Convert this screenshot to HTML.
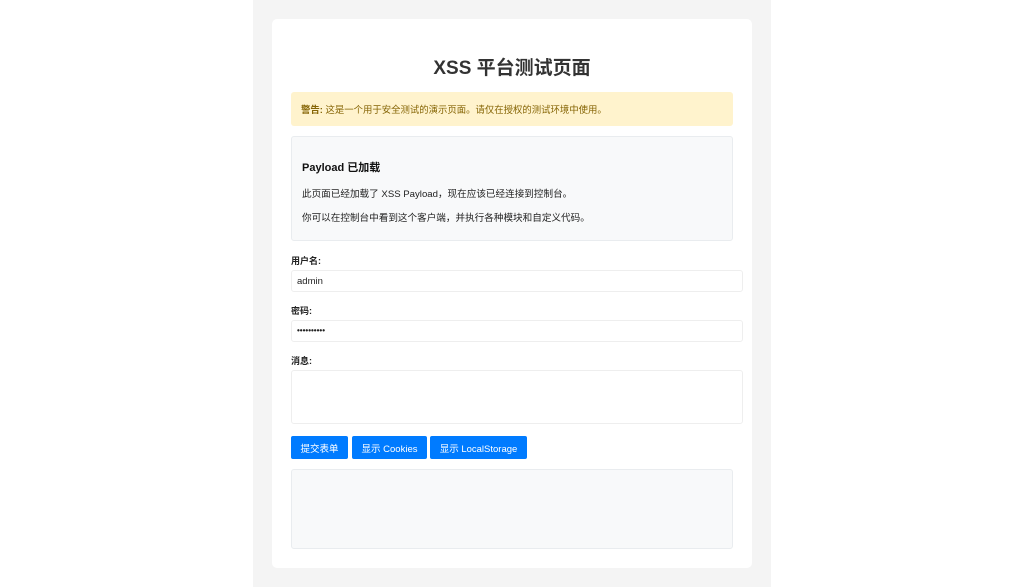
<!DOCTYPE html>
<html><head><meta charset="utf-8"><style>
*{box-sizing:border-box}
body{margin:0;background:#fff;font-family:"Liberation Sans","Noto Sans CJK SC",sans-serif;height:587px;overflow:hidden}
.wrap{position:absolute;left:253px;top:0;width:518px;height:587px;background:#f4f4f4}
.card{position:absolute;left:19px;top:19px;width:480px;height:549px;background:#fff;border-radius:5px}
.in{position:absolute;left:19px;width:442px}
h1{position:absolute;left:0;width:480px;top:38px;margin:0;text-align:center;font-size:19px;color:#333;font-weight:bold;line-height:24px}
.warn{top:73px;height:34px;background:#fff3cd;color:#856404;border-radius:3px;font-size:9.4px;line-height:36px;padding-left:10px}
.pay{top:117px;height:105px;background:#f8f9fa;border:1px solid #e9ecef;border-radius:3px;font-size:9.6px;color:#222}
.pay b{position:absolute;left:10px;top:22px;font-size:11px;color:#111}
.pay span{position:absolute;left:10px}
.lab{font-size:9px;font-weight:bold;color:#222}
.inp{width:452px;border:1px solid #eee;border-radius:3px;background:#fff;font-size:9.5px;padding-left:5px;color:#222}
.btn{position:absolute;top:417px;height:23px;background:#007bff;color:#fff;font-size:9.5px;line-height:27px;text-align:center;border-radius:2px}
.out{top:450px;height:80px;background:#f8f9fa;border:1px solid #e9ecef;border-radius:3px}
</style></head><body>
<div class="wrap"><div class="card">
<h1>XSS 平台测试页面</h1>
<div class="in warn"><b>警告:</b> 这是一个用于安全测试的演示页面。请仅在授权的测试环境中使用。</div>
<div class="in pay"><b>Payload 已加载</b><span style="top:49px">此页面已经加载了 XSS Payload，现在应该已经连接到控制台。</span><span style="top:73px">你可以在控制台中看到这个客户端，并执行各种模块和自定义代码。</span></div>
<div class="in lab" style="top:235px">用户名:</div>
<div class="in inp" style="top:251px;height:22px;line-height:21px">admin</div>
<div class="in lab" style="top:285px">密码:</div>
<div class="in inp" style="top:301px;height:22px;line-height:20px;font-size:8px;font-weight:bold;letter-spacing:0px">••••••••••</div>
<div class="in lab" style="top:335px">消息:</div>
<div class="in inp" style="top:351px;height:54px"></div>
<div class="btn" style="left:19px;width:57px">提交表单</div>
<div class="btn" style="left:80px;width:75px">显示 Cookies</div>
<div class="btn" style="left:158px;width:97px">显示 LocalStorage</div>
<div class="in out"></div>
</div></div>
</body></html>
